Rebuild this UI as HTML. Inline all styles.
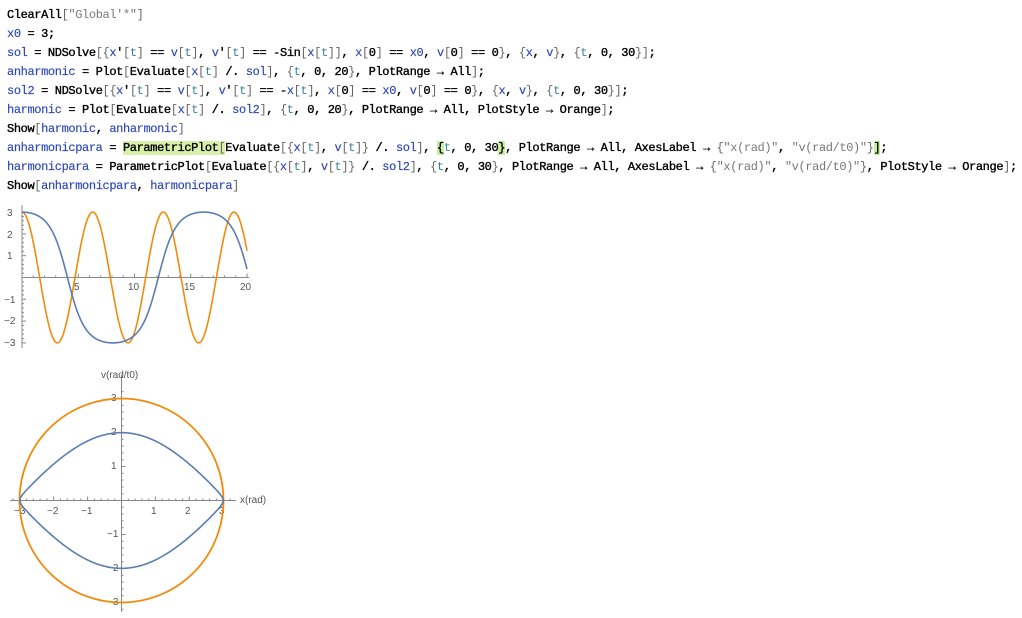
<!DOCTYPE html>
<html><head><meta charset="utf-8">
<style>
body{margin:0;background:#fff;width:1022px;height:618px;overflow:hidden;position:relative}
.code{position:absolute;left:7px;top:6px;font-family:"Liberation Mono",monospace;font-size:12px;letter-spacing:-0.38px;line-height:19px;white-space:pre;color:#000;-webkit-text-stroke:0.35px #000}
.b{color:#2a46b4;-webkit-text-stroke:0.15px #2a46b4}
.g{color:#666;-webkit-text-stroke:0}
.s{color:#777;-webkit-text-stroke:0}
.t{color:#3a7fa0;-webkit-text-stroke:0}
.hl{background:#d8f0a8}
.hl2{background:#c8f0a0}
svg{position:absolute;left:0;top:0}
text{font-family:"Liberation Sans",sans-serif;font-size:10px;fill:#555}
</style></head><body>
<div class="code">ClearAll<span class="g">[</span><span class="s">"Global'*"</span><span class="g">]</span>
<span class="b">x0</span> = 3;
<span class="b">sol</span> = NDSolve<span class="g">[{</span><span class="b">x</span>'<span class="g">[</span><span class="t">t</span><span class="g">]</span> == <span class="b">v</span><span class="g">[</span><span class="t">t</span><span class="g">]</span>, <span class="b">v</span>'<span class="g">[</span><span class="t">t</span><span class="g">]</span> == -Sin<span class="g">[</span><span class="b">x</span><span class="g">[</span><span class="t">t</span><span class="g">]]</span>, <span class="b">x</span><span class="g">[</span>0<span class="g">]</span> == <span class="b">x0</span>, <span class="b">v</span><span class="g">[</span>0<span class="g">]</span> == 0<span class="g">}</span>, <span class="g">{</span><span class="b">x</span>, <span class="b">v</span><span class="g">}</span>, <span class="g">{</span><span class="t">t</span>, 0, 30<span class="g">}]</span>;
<span class="b">anharmonic</span> = Plot<span class="g">[</span>Evaluate<span class="g">[</span><span class="b">x</span><span class="g">[</span><span class="t">t</span><span class="g">]</span> /. <span class="b">sol</span><span class="g">]</span>, <span class="g">{</span><span class="t">t</span>, 0, 20<span class="g">}</span>, PlotRange → All<span class="g">]</span>;
<span class="b">sol2</span> = NDSolve<span class="g">[{</span><span class="b">x</span>'<span class="g">[</span><span class="t">t</span><span class="g">]</span> == <span class="b">v</span><span class="g">[</span><span class="t">t</span><span class="g">]</span>, <span class="b">v</span>'<span class="g">[</span><span class="t">t</span><span class="g">]</span> == -<span class="b">x</span><span class="g">[</span><span class="t">t</span><span class="g">]</span>, <span class="b">x</span><span class="g">[</span>0<span class="g">]</span> == <span class="b">x0</span>, <span class="b">v</span><span class="g">[</span>0<span class="g">]</span> == 0<span class="g">}</span>, <span class="g">{</span><span class="b">x</span>, <span class="b">v</span><span class="g">}</span>, <span class="g">{</span><span class="t">t</span>, 0, 30<span class="g">}]</span>;
<span class="b">harmonic</span> = Plot<span class="g">[</span>Evaluate<span class="g">[</span><span class="b">x</span><span class="g">[</span><span class="t">t</span><span class="g">]</span> /. <span class="b">sol2</span><span class="g">]</span>, <span class="g">{</span><span class="t">t</span>, 0, 20<span class="g">}</span>, PlotRange → All, PlotStyle → Orange<span class="g">]</span>;
Show<span class="g">[</span><span class="b">harmonic</span>, <span class="b">anharmonic</span><span class="g">]</span>
<span class="b">anharmonicpara</span> = <span class="hl">ParametricPlot<span class="g">[</span></span>Evaluate<span class="g">[{</span><span class="b">x</span><span class="g">[</span><span class="t">t</span><span class="g">]</span>, <span class="b">v</span><span class="g">[</span><span class="t">t</span><span class="g">]}</span> /. <span class="b">sol</span><span class="g">]</span>, <span class="hl2">{</span><span class="t">t</span>, 0, 30<span class="hl2">}</span>, PlotRange → All, AxesLabel → <span class="g">{</span><span class="s">"x(rad)"</span>, <span class="s">"v(rad/t0)"</span><span class="g">}</span><span class="hl2">]</span>;
<span class="b">harmonicpara</span> = ParametricPlot<span class="g">[</span>Evaluate<span class="g">[{</span><span class="b">x</span><span class="g">[</span><span class="t">t</span><span class="g">]</span>, <span class="b">v</span><span class="g">[</span><span class="t">t</span><span class="g">]}</span> /. <span class="b">sol2</span><span class="g">]</span>, <span class="g">{</span><span class="t">t</span>, 0, 30<span class="g">}</span>, PlotRange → All, AxesLabel → <span class="g">{</span><span class="s">"x(rad)"</span>, <span class="s">"v(rad/t0)"</span><span class="g">}</span>, PlotStyle → Orange<span class="g">]</span>;
Show<span class="g">[</span><span class="b">anharmonicpara</span>, <span class="b">harmonicpara</span><span class="g">]</span></div>
<svg id="s" width="1022" height="618" xmlns="http://www.w3.org/2000/svg">
<g stroke="#888" stroke-width="1" fill="none">
<line x1="22" y1="205" x2="22" y2="348"/>
<line x1="22" y1="277.5" x2="249" y2="277.5"/>
<line x1="121.5" y1="375" x2="121.5" y2="612"/>
<line x1="10" y1="500.5" x2="236" y2="500.5"/>
</g>
<g id="ticks" stroke="#888" stroke-width="1"></g>
<text x="7" y="216">3</text><text x="7" y="238">2</text><text x="7" y="259">1</text>
<text x="4" y="303">−1</text><text x="4" y="324">−2</text><text x="4" y="346">−3</text>
<text x="74" y="290">5</text><text x="128" y="290">10</text><text x="184" y="290">15</text><text x="240" y="290">20</text>
<text x="101" y="378">v(rad/t0)</text>
<text x="240" y="503">x(rad)</text>
<text x="14" y="514">−3</text><text x="47" y="514">−2</text><text x="81" y="514">−1</text>
<text x="151" y="514">1</text><text x="185" y="514">2</text><text x="219" y="514">3</text>
<text x="111" y="401">3</text><text x="111" y="435">2</text><text x="111" y="469">1</text>
<text x="107" y="537">−1</text><text x="107" y="571">−2</text><text x="107" y="605">−3</text>
<path id="ho" fill="none" stroke="#f28a0d" stroke-width="1.6"/>
<path id="an" fill="none" stroke="#5a7db4" stroke-width="1.6"/>
<circle cx="121.5" cy="500.5" r="102" fill="none" stroke="#f28a0d" stroke-width="1.8"/>
<path id="pa" fill="none" stroke="#5a7db4" stroke-width="1.6"/>
</svg>
<script>
(function(){
var X=function(t){return 22+t*11.25},Y=function(v){return 277.5-v*21.8};
var h="",a="",x=3,v=0,dt=0.01,n=2000;
function f(x,v){return [v,-Math.sin(x)];}
for(var i=0;i<=n;i++){var t=i*dt;
 h+=(i?"L":"M")+X(t).toFixed(2)+" "+Y(3*Math.cos(t)).toFixed(2);
 a+=(i?"L":"M")+X(t).toFixed(2)+" "+Y(x).toFixed(2);
 var k1=f(x,v),k2=f(x+dt/2*k1[0],v+dt/2*k1[1]),k3=f(x+dt/2*k2[0],v+dt/2*k2[1]),k4=f(x+dt*k3[0],v+dt*k3[1]);
 x+=dt/6*(k1[0]+2*k2[0]+2*k3[0]+k4[0]);v+=dt/6*(k1[1]+2*k2[1]+2*k3[1]+k4[1]);}
document.getElementById("ho").setAttribute("d",h);
document.getElementById("an").setAttribute("d",a);
var p="",q="",PX=function(x){return 121.5+x*33.9},PY=function(v){return 500.5-v*34};
for(var j=0;j<=300;j++){var xx=-3+6*j/300,vv=Math.sqrt(Math.max(0,2*(Math.cos(xx)-Math.cos(3))));
 p+=(j?"L":"M")+PX(xx).toFixed(2)+" "+PY(vv).toFixed(2);q+=(j?"L":"M")+PX(xx).toFixed(2)+" "+PY(-vv).toFixed(2);}
document.getElementById("pa").setAttribute("d",p+q);
var tk="";
for(var k=1;k<=20;k++){var L=k%5==0?4:2;tk+='<line x1="'+X(k)+'" y1="277.5" x2="'+X(k)+'" y2="'+(277.5-L)+'"/>';}
for(var k=-15;k<=15;k++){var L=k%5==0?4:2;tk+='<line x1="22" y1="'+Y(k/5)+'" x2="'+(22+L)+'" y2="'+Y(k/5)+'"/>';}
for(var k=-16;k<=16;k++){var L=k%5==0?4:2;var xx=PX(k/5);tk+='<line x1="'+xx+'" y1="500.5" x2="'+xx+'" y2="'+(500.5-L)+'"/>';var yy=PY(k/5);tk+='<line x1="121.5" y1="'+yy+'" x2="'+(121.5+L)+'" y2="'+yy+'"/>';}
document.getElementById("ticks").innerHTML=tk;
})();
</script>
</body></html>
